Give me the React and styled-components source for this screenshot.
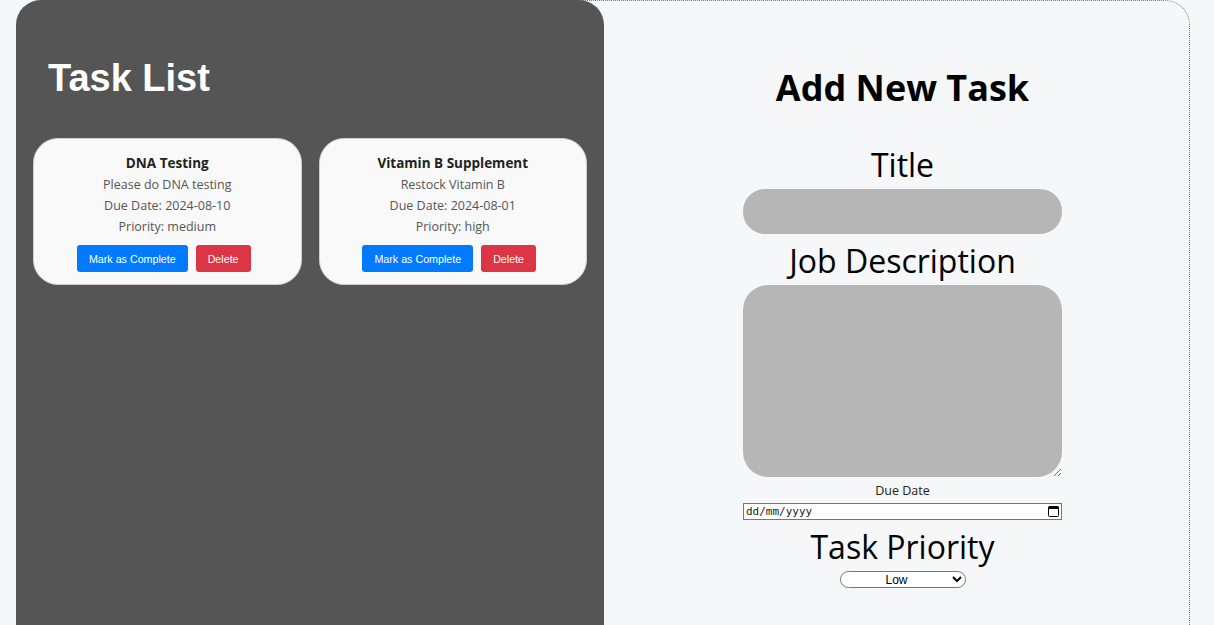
import React from "react";
import styled, { createGlobalStyle } from "styled-components";

const tasks = [
    { title: "DNA Testing", description: "Please do DNA testing", due: "2024-08-10", priority: "medium" },
    { title: "Vitamin B Supplement", description: "Restock Vitamin B", due: "2024-08-01", priority: "high" },
];

function TaskCard({ task }) {
    return (
        <Card>
            <CardTitle>{task.title}</CardTitle>
            <CardLine>{task.description}</CardLine>
            <CardLine>Due Date: {task.due}</CardLine>
            <CardLine>Priority: {task.priority}</CardLine>
            <ButtonRow>
                <ActionButton $color="#007bff">Mark as Complete</ActionButton>
                <ActionButton $color="#dc3545">Delete</ActionButton>
            </ButtonRow>
        </Card>
    )
}

function CalendarIcon() {
    return (
        <svg width="11" height="11" viewBox="0 0 11 11">
            <rect x="0.5" y="0.5" width="10" height="10" rx="1" fill="none" stroke="#000" />
            <rect x="0.5" y="0.5" width="10" height="2.5" fill="#000" />
        </svg>
    )
}

export default function App() {
    return (
        <>
            <GlobalStyle />
            <Layout>
                <ListPanel>
                    <ListTitle>Task List</ListTitle>
                    <CardGrid>
                        {tasks.map((t) => (
                            <TaskCard key={t.title} task={t} />
                        ))}
                    </CardGrid>
                </ListPanel>
                <FormPanel>
                    <FormTitle>Add New Task</FormTitle>
                    <FieldLabel>Title</FieldLabel>
                    <TextInput type="text" />
                    <FieldLabel $gap={3}>Job Description</FieldLabel>
                    <TextArea />
                    <SmallLabel>Due Date</SmallLabel>
                    <DateBox>
                        <DateInput type="text" placeholder="dd/mm/yyyy" />
                        <IconSlot>
                            <CalendarIcon />
                        </IconSlot>
                    </DateBox>
                    <FieldLabel $gap={3}>Task Priority</FieldLabel>
                    <PrioritySelect defaultValue="low">
                        <option value="low">Low</option>
                        <option value="medium">Medium</option>
                        <option value="high">High</option>
                    </PrioritySelect>
                </FormPanel>
            </Layout>
        </>
    )
}

const GlobalStyle = createGlobalStyle`
    body {
        margin: 0;
        background-color: #f6f7f9;
        font-family: "Open Sans", "Liberation Sans", sans-serif;
    }
`
const Layout = styled.div`
    display: grid;
    grid-template-columns: 587px 1fr;
    margin: 0 24px 0 16px;
    min-height: 700px;
    border: 1px dotted #777;
    border-bottom: none;
    border-radius: 25px 25px 0 0;
    box-sizing: border-box;
`
const ListPanel = styled.section`
    background-color: #555555;
    border-radius: 25px 25px 0 0;
    margin: -1px 0 0 -1px;
    padding: 0 17px;
`
const ListTitle = styled.h1`
    font-family: "Liberation Sans", Arial, sans-serif;
    font-size: 38px;
    font-weight: bold;
    color: #ffffff;
    margin: 57px 0 38px 15px;
`
const CardGrid = styled.div`
    display: grid;
    grid-template-columns: 1fr 1fr;
    gap: 17px;
`
const Card = styled.div`
    background-color: #f9f9f9;
    border: 1px solid #cfcfcf;
    border-radius: 25px;
    padding: 14px 10px 12px;
    text-align: center;
    box-sizing: border-box;
    height: 147px;
`
const CardTitle = styled.h3`
    font-size: 13.5px;
    font-weight: bold;
    color: #222;
    margin: 0 0 1px;
    line-height: 20px;
`
const CardLine = styled.p`
    font-size: 12.5px;
    color: #555;
    margin: 0;
    line-height: 21px;
`
const ButtonRow = styled.div`
    display: flex;
    justify-content: center;
    gap: 8px;
    margin-top: 8px;
    padding-right: 7px;
`
const ActionButton = styled.button`
    background-color: ${(p) => p.$color};
    color: #fff;
    border: none;
    border-radius: 3px;
    height: 27px;
    padding: 0 12px;
    font-family: "Liberation Sans", Arial, sans-serif;
    font-size: 10.7px;
    font-weight: 500;
`
const FormPanel = styled.section`
    display: flex;
    flex-direction: column;
    align-items: center;
    padding-left: 12px;
`
const FormTitle = styled.h2`
    font-size: 36px;
    font-weight: bold;
    color: #000;
    margin: 63px 0 29px;
    line-height: 48px;
`
const FieldLabel = styled.h3`
    font-size: 32px;
    font-weight: normal;
    color: #000;
    margin: ${(p) => p.$gap || 0}px 0 0;
    line-height: 48px;
`
const TextInput = styled.input`
    width: 319px;
    height: 45px;
    border: none;
    border-radius: 22px;
    background-color: #b6b6b6;
    box-sizing: border-box;
`
const TextArea = styled.textarea`
    width: 319px;
    height: 192px;
    border: none;
    border-radius: 25px;
    background-color: #b6b6b6;
    box-sizing: border-box;
    display: block;
`
const SmallLabel = styled.label`
    font-size: 12.5px;
    color: #222;
    margin-top: 6px;
    line-height: 16px;
`
const DateBox = styled.div`
    position: relative;
    width: 319px;
    margin-top: 4px;
`
const DateInput = styled.input`
    display: block;
    width: 100%;
    height: 17px;
    box-sizing: border-box;
    border: 1px solid #767676;
    background-color: #fff;
    font-family: "DejaVu Sans Mono", monospace;
    font-size: 11px;
    padding: 0 2px;
    outline: none;

    &::placeholder {
        color: #222;
    }
`
const IconSlot = styled.span`
    position: absolute;
    right: 3px;
    top: 3px;
    display: flex;
    pointer-events: none;
`
const PrioritySelect = styled.select`
    width: 126px;
    height: 17px;
    border: 1px solid #767676;
    border-radius: 10px;
    background-color: #fff;
    font-family: "Liberation Sans", Arial, sans-serif;
    font-size: 12px;
    text-align: center;
    text-align-last: center;
    padding: 0;
`
